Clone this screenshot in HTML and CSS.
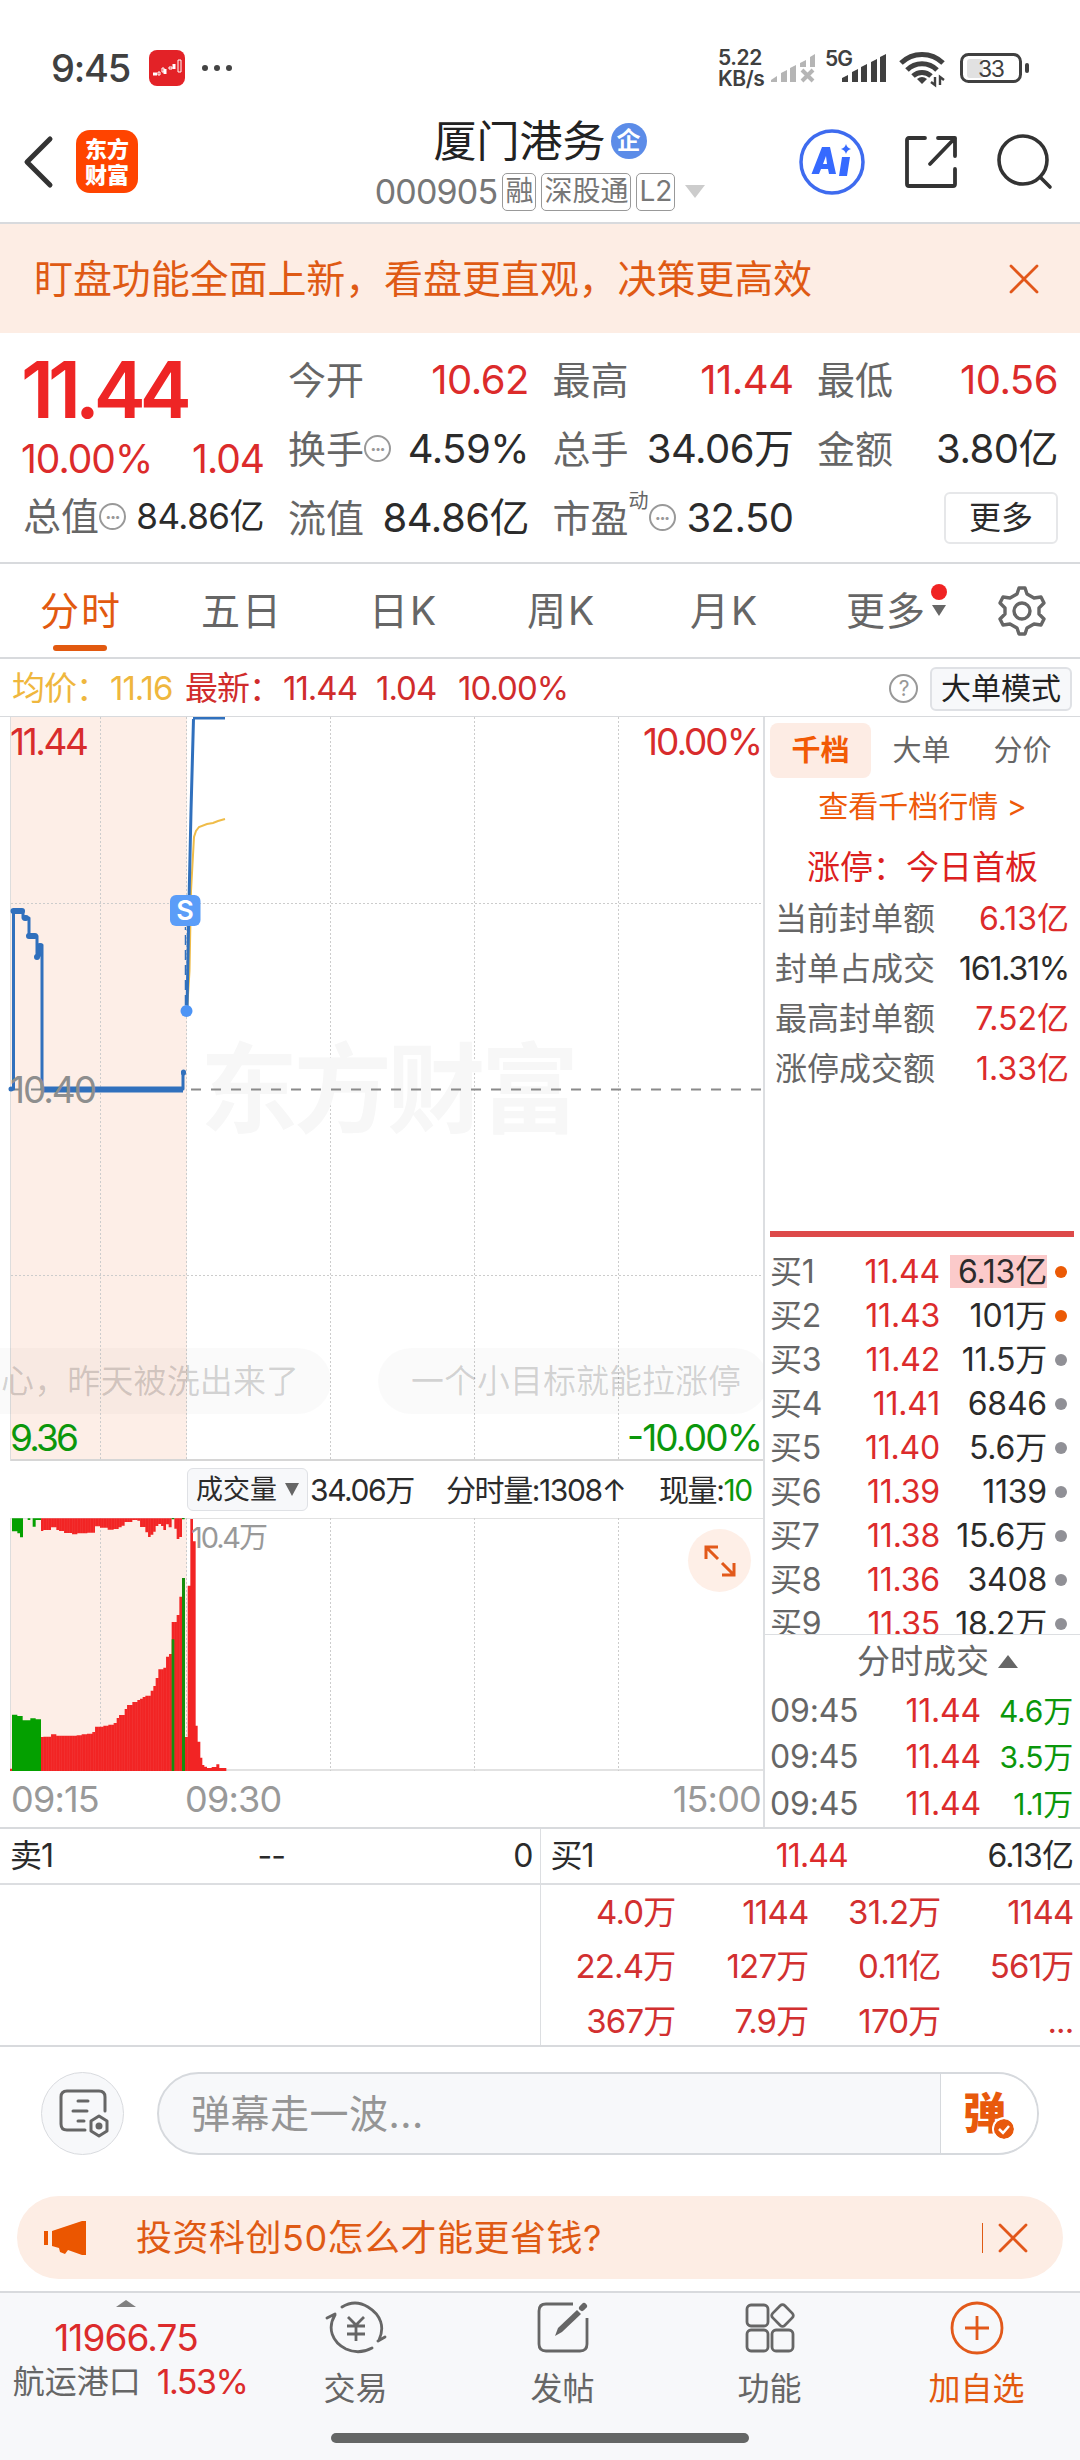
FILE: index.html
```html
<!DOCTYPE html>
<html lang="zh-CN">
<head>
    <meta charset="UTF-8">
    <meta name="viewport" content="width=device-width, initial-scale=1.0">
    <title>厦门港务 000905</title>
    <link rel="stylesheet" href="styles.css">
</head>
<body>
    <div class="status-bar">
        <span class="clock">9:45</span>
        <svg class="app-icon" width="36" height="36" viewBox="0 0 36 36">
            <rect width="36" height="36" rx="8" fill="#e32227"/>
            <path d="M4 24h4M16 19v5M25 14v5" stroke="#fff" stroke-width="3" fill="none"/>
            <path d="M9 22h2v3H9zM13 18h2v4h-2zM20 17h3v2h-3zM29 10h3v12h-3z" fill="none" stroke="#fff"/>
        </svg>
        <svg class="dots" width="34" height="8" viewBox="0 0 34 8" fill="#444">
            <circle cx="4" cy="4" r="3"/><circle cx="16" cy="4" r="3"/><circle cx="28" cy="4" r="3"/>
        </svg>
        <div class="net-speed"><span>5.22</span><span>KB/s</span></div>
        <svg class="signals" width="264" height="48" viewBox="770 44 264 48">
            <g fill="#b5b5b5">
                <path d="M771 82V80l6-4v6zM781 82V73l6-3v12zM790 82V68l6-3v17zM800 67V63l6-3v7zM810 67V57l5-3v13z"/>
                <path d="M802 70l11 11M813 70l-11 11" stroke="#b5b5b5" stroke-width="4"/>
            </g>
            <text class="five-g" x="825" y="66" textLength="28">5G</text>
            <path d="M842 82v-4l6-3v7zM852 82V72l6-3v13zM861 82V67l6-3v18zM871 82V62l6-3v23zM880 82V57l6-3v28z" fill="#404040"/>
            <g fill="none" stroke="#404040" stroke-width="5">
                <path d="M901 63a30 30 0 0 1 42 0M907 70a21 21 0 0 1 30 0M913 76a13 13 0 0 1 18 0"/>
            </g>
            <path d="M922 84l-5-5q5-4 10 0z" fill="#404040"/>
            <path d="M935 77v8l-4-3M940 85v-8l4 3" fill="none" stroke="#404040" stroke-width="2.4"/>
            <rect x="967" y="59" width="16" height="19" rx="3" fill="#e1e1e1"/>
            <rect x="961.500" y="54.500" width="59" height="27" rx="7" fill="none" stroke="#404040" stroke-width="3"/>
            <rect x="1025" y="63" width="4" height="10" rx="2" fill="#404040"/>
            <text class="battery" x="978" y="77" textLength="27">33</text>
        </svg>
    </div>

    <header class="header">
        <div class="header-left">
            <svg width="32" height="54" viewBox="0 0 32 54" fill="none" stroke="#333" stroke-width="5" stroke-linecap="round" stroke-linejoin="round">
                <path d="M27 4L4 27l23 23"/>
            </svg>
            <div class="logo"><span>东方</span><span>财富</span></div>
        </div>
        <div class="header-title">
            <div class="stock-name">厦门港务<span class="corp">企</span></div>
            <div class="stock-code">
                <span class="code">000905</span>
                <span class="tag">融</span>
                <span class="tag">深股通</span>
                <span class="tag">L2</span>
                <svg width="20" height="13" viewBox="0 0 20 13"><path d="M0 0h20L10 13z" fill="#ccc"/></svg>
            </div>
        </div>
        <div class="header-right">
            <svg width="66" height="66" viewBox="0 0 66 66">
                <circle cx="33" cy="33" r="31" fill="none" stroke="#3e6bef" stroke-width="3.500"/>
                <path d="M12.500 45L23 18h8l6 27h-7l-1-5h-7l-2 5zM24 35h4l-1-8z" fill="#366aff" fill-rule="evenodd"/>
                <path d="M43 28h8l-3 19h-8zM47 15q1 4 5 5-4 1-5 5-1-4-5-5 4-1 5-5z" fill="#366aff"/>
            </svg>
            <svg width="54" height="54" viewBox="0 0 54 54" fill="none" stroke="#333" stroke-width="3.800" stroke-linecap="round" stroke-linejoin="round">
                <path d="M21 3H5q-2 0-2 2v44q0 2 2 2h44q2 0 2-2V34M34 3h17v18M51 3L26 29"/>
            </svg>
            <svg width="56" height="56" viewBox="0 0 56 56" fill="none" stroke="#333" stroke-width="3.600" stroke-linecap="round">
                <circle cx="26" cy="26" r="24"/><path d="M43 43l10 10"/>
            </svg>
        </div>
    </header>

    <div class="notice">
        <span>盯盘功能全面上新，看盘更直观，决策更高效</span>
        <svg width="30" height="30" viewBox="0 0 30 30" stroke="#e2571a" stroke-width="2.800" stroke-linecap="round"><path d="M2 2l26 26M28 2L2 28"/></svg>
    </div>

    <section class="quote">
        <div class="quote-main">
            <div class="price">11.44</div>
            <div class="change"><span>10.00%</span><span>1.04</span></div>
            <div class="cell small"><label>总值</label><i class="more-dot">•••</i><b>84.86亿</b></div>
        </div>
        <div class="quote-grid">
            <div class="cell"><label>今开</label><b class="red">10.62</b></div>
            <div class="cell"><label>最高</label><b class="red">11.44</b></div>
            <div class="cell"><label>最低</label><b class="red">10.56</b></div>
            <div class="cell"><label>换手</label><i class="more-dot">•••</i><b>4.59%</b></div>
            <div class="cell"><label>总手</label><b>34.06万</b></div>
            <div class="cell"><label>金额</label><b>3.80亿</b></div>
            <div class="cell"><label>流值</label><b>84.86亿</b></div>
            <div class="cell"><label>市盈<sup>动</sup></label><i class="more-dot">•••</i><b>32.50</b></div>
            <div class="cell end"><span class="more-btn">更多</span></div>
        </div>
    </section>

    <nav class="tabs">
        <span class="tab active">分时</span>
        <span class="tab">五日</span>
        <span class="tab">日K</span>
        <span class="tab">周K</span>
        <span class="tab">月K</span>
        <span class="tab tab-more">更多
            <svg width="18" height="32" viewBox="0 0 18 32"><circle cx="9" cy="8" r="8" fill="#f02323"/><path d="M2 21h14L9 32z" fill="#666"/></svg>
        </span>
        <svg class="gear" width="50" height="50" viewBox="0 0 50 50" fill="none" stroke="#666" stroke-width="3.400" stroke-linejoin="round">
            <path d="M20 8l2-6h6l2 6 7 4 7-1 3 6-5 5v6l5 5-3 6-7-1-7 4-2 6h-6l-2-6-7-4-7 1-3-6 5-5v-6l-5-5 3-6 7 1z"/>
            <circle cx="25" cy="25" r="8"/>
        </svg>
    </nav>

    <div class="info">
        <span class="avg">均价：<em>11.16</em></span>
        <span class="last">最新：<em>11.44</em></span>
        <span class="diff">1.04</span>
        <span class="pct">10.00%</span>
        <i class="help">?</i>
        <span class="mode-btn">大单模式</span>
    </div>

    <main class="board">
        <section class="charts">
            <svg class="price-chart" width="763" height="744" viewBox="0 717 763 744">
                <rect x="11" y="717" width="176" height="744" fill="#fdeee7"/>
                <path d="M10.500 717v744" stroke="#ddd"/>
                <g class="grid-lines">
                    <path d="M100.500 717v744M186.500 717v744M330.500 717v744M474.500 717v744M618.500 717v744M11 903.500h752M11 1275.500h752"/>
                </g>
                <path d="M11 1460h752" stroke="#d6d6d6" stroke-width="2"/>
                <text class="watermark" x="200" y="1125" textLength="379">东方财富</text>
                <path d="M11 1089.500h752" stroke="#8a8a8a" stroke-width="2" stroke-dasharray="10 10"/>
                <path d="M187 1011l2.500-40 1.500-80 3-54 2-6 3-4 8-3 6-1 5-2 7-2" fill="none" stroke="#efbc49" stroke-width="2"/>
                <g fill="none" stroke="#3070bd">
                    <path d="M11 1089h2.500V911H23v7h6v18h8v20h2v-11h3v144h141v-18" stroke-width="3" stroke-linejoin="round"/>
                    <path d="M42 1089.500h141" stroke-width="6"/>
                    <path d="M13.500 911H22M25 918h1M29 936h6M37 957v0M40 946v6" stroke-width="6" stroke-linecap="round"/>
                    <path d="M183.500 1072v1M11 1089v0" stroke-width="5" stroke-linecap="round"/>
                    <path d="M187 1011l2-110 2-90 2.500-92" stroke-width="3"/>
                    <path d="M193 718h32" stroke-width="3"/>
                    <path d="M185.500 1005v-78" stroke-width="1.500" stroke-dasharray="10 5"/>
                </g>
                <circle cx="186.500" cy="1011" r="6" fill="#4d94f5"/>
                <rect x="170" y="895" width="30.500" height="31" rx="6" fill="#5b9df8"/>
                <text class="sell" x="185" y="920">S</text>
                <text class="axis up" x="10" y="755" textLength="79">11.44</text>
                <text class="axis up" x="643" y="755" textLength="120">10.00%</text>
                <text class="axis mid" x="10" y="1103" textLength="87">10.40</text>
                <text class="axis down" x="10" y="1451" textLength="69">9.36</text>
                <text class="axis down" x="627" y="1451" textLength="136">-10.00%</text>
                <g class="bullets">
                    <rect x="-60" y="1348" width="391" height="66" rx="33"/>
                    <text x="-32" y="1393" textLength="331">恶心，昨天被洗出来了</text>
                    <rect x="378" y="1348" width="390" height="66" rx="33"/>
                    <text x="411" y="1393" textLength="330">一个小目标就能拉涨停</text>
                </g>
            </svg>

            <div class="vol-head">
                <span class="vol-btn">成交量<svg width="14" height="13" viewBox="0 0 14 13"><path d="M0 0h14L7 13z" fill="#666"/></svg></span>
                <span class="vol-total">34.06万</span>
                <span class="vol-min">分时量:1308↑</span>
                <span class="vol-now">现量:<em>10</em></span>
            </div>

            <div class="vol-wrap">
                <svg class="vol-chart" width="763" height="253" viewBox="0 1518 763 253">
                    <rect x="11" y="1518" width="176" height="253" fill="#fdeee7"/>
                    <path d="M10.500 1518v253" stroke="#ddd"/>
                    <path d="M11 1518.500h752" stroke="#e2e2e2"/>
                    <path d="M11 1770h752" stroke="#e2e2e2" stroke-width="2"/>
                    <g class="grid-lines"><path d="M100.500 1518v253M186.500 1518v253M330.500 1518v253M474.500 1518v253M618.500 1518v253"/></g>
                    <g transform="translate(0 1500) scale(.33333)">
                        <path id="redBars" fill="#f22424" d="M30 806h93V711h7v-1h23v-7h16v4h61v-1h15v-3h16v-2h16v-5h8v-16h25v-3h15v-3h16v-5h9v-15h7v-9h17v-18h7v-12h16v-9h15v-6h8v-4h8v-5h8v-4h16v-15h8v-14h7v-24h8v-26h15v-5h8v-33h9v-8h8V366h15v-21h8v-55h9v421h16V257h8V57h8v67h8v553h6v48h8v48h6v22h6v5h8v4h14v-3h14v-8h9v11h21v9H30zM30 55h93v38h7v-3h23v-8h16v8h8v3h15v6h24v4h16v-3h30v-2h23V79h15v4h23v6h18v-2h15v-5h9v-5h9V66h23v-6h15v2h8v19h16v16h8v14h8v-7h8v-9h7V78h8v-6h8v6h7v12h8V73h8v9h9V55h8v31h7v31h8v-6h8V55z"/>
                        <clipPath id="barClip"><use href="#redBars"/></clipPath>
                        <path d="M28 430h540" stroke="#fff" stroke-opacity=".16" stroke-width="770" stroke-dasharray="1 6.850" clip-path="url(#barClip)"/>
                        <path fill="#04a000" d="M36 813V644h16v4h16v13h23v-6h16v3h16v155zM36 55v39h16v6h8v12h9V55zM83 55h8v5h-8zM98 55h9v25h-9zM107 55h16v5h-16z"/>
                        <path fill="#158f0d" d="M515 418h8v395h-8zM546 234h9v579h-9zM515 54h8v4h-8zM546 54h8v4h-8z"/>
                    </g>
                    <text class="vol-max" x="191" y="1548" textLength="77">10.4万</text>
                </svg>
                <div class="expand">
                    <svg width="32" height="32" viewBox="0 0 32 32" fill="none" stroke="#e2591a" stroke-width="3"><path d="M2 14V2h12M2 2l12 12M30 18v12H18M30 30L18 18"/></svg>
                </div>
            </div>
            <div class="times"><span>09:15</span><span>09:30</span><span>15:00</span></div>
        </section>

        <aside class="side">
            <div class="side-tabs"><span class="on">千档</span><span>大单</span><span>分价</span></div>
            <div class="side-link">查看千档行情 &gt;</div>
            <div class="limit-title">涨停：今日首板</div>
            <div class="limit"><span>当前封单额</span><b class="red">6.13亿</b></div>
            <div class="limit"><span>封单占成交</span><b class="tight">161.31%</b></div>
            <div class="limit"><span>最高封单额</span><b class="red">7.52亿</b></div>
            <div class="limit"><span>涨停成交额</span><b class="red">1.33亿</b></div>
            <div class="ratio"></div>
            <div class="book">
                <div class="bid hot"><span>买1</span><b>11.44</b><em class="hl">6.13亿</em><i></i></div>
                <div class="bid hot"><span>买2</span><b>11.43</b><em>101万</em><i></i></div>
                <div class="bid"><span>买3</span><b>11.42</b><em>11.5万</em><i></i></div>
                <div class="bid"><span>买4</span><b>11.41</b><em>6846</em><i></i></div>
                <div class="bid"><span>买5</span><b>11.40</b><em>5.6万</em><i></i></div>
                <div class="bid"><span>买6</span><b>11.39</b><em>1139</em><i></i></div>
                <div class="bid"><span>买7</span><b>11.38</b><em>15.6万</em><i></i></div>
                <div class="bid"><span>买8</span><b>11.36</b><em>3408</em><i></i></div>
                <div class="bid"><span>买9</span><b>11.35</b><em>18.2万</em><i></i></div>
            </div>
            <div class="deals-title">分时成交<svg width="20" height="13" viewBox="0 0 20 13"><path d="M0 13h20L10 0z" fill="#666"/></svg></div>
            <div class="deal"><span>09:45</span><b>11.44</b><em>4.6万</em></div>
            <div class="deal"><span>09:45</span><b>11.44</b><em>3.5万</em></div>
            <div class="deal"><span>09:45</span><b>11.44</b><em>1.1万</em></div>
        </aside>
    </main>

    <section class="queue">
        <div class="queue-side sell-side">
            <div class="queue-head"><span>卖1</span><span>--</span><span>0</span></div>
        </div>
        <div class="queue-side">
            <div class="queue-head buy"><span>买1</span><span class="red">11.44</span><span>6.13亿</span></div>
            <div class="queue-grid">
                <span>4.0万</span><span>1144</span><span>31.2万</span><span>1144</span>
                <span>22.4万</span><span>127万</span><span>0.11亿</span><span>561万</span>
                <span>367万</span><span>7.9万</span><span>170万</span><span>...</span>
            </div>
        </div>
    </section>

    <div class="comment">
        <div class="comment-set">
            <svg width="52" height="50" viewBox="0 0 52 50" fill="none" stroke="#666" stroke-width="3" stroke-linecap="round">
                <path d="M26 41H8q-6 0-6-6V8q0-6 6-6h32q6 0 6 6v14M19 12h10M14 22h14M19 32h6"/>
                <path d="M40 27l8 5v10l-8 5-8-5V32z" stroke-linejoin="round"/><circle cx="40" cy="37" r="2" fill="#666"/>
            </svg>
        </div>
        <div class="comment-box">
            <span>弹幕走一波...</span>
            <div class="comment-send">弹
                <svg width="20" height="20" viewBox="0 0 20 20"><circle cx="10" cy="10" r="10" fill="#e8590c"/><path d="M5 10l4 4 6-7" fill="none" stroke="#fff" stroke-width="2.500"/></svg>
            </div>
        </div>
    </div>

    <div class="promo">
        <svg width="42" height="36" viewBox="0 0 42 36" fill="#eb5600"><path d="M0 11h4v14H0zM8 11L38 1v0h4v34h-4l-14-5-3 4-5-2-1-4-7-2z"/></svg>
        <span class="promo-text">投资科创50怎么才能更省钱?</span>
        <svg class="promo-close" width="30" height="30" viewBox="0 0 30 30" stroke="#e2571a" stroke-width="2.800" stroke-linecap="round"><path d="M2 2l26 26M28 2L2 28"/></svg>
    </div>

    <footer class="footer">
        <div class="footer-row">
            <div class="index">
                <svg width="20" height="7" viewBox="0 0 20 7"><path d="M0 7h20L10 0z" fill="#808080"/></svg>
                <div class="index-value">11966.75</div>
                <div class="index-name"><span>航运港口</span><b>1.53%</b></div>
            </div>
            <div class="item">
                <svg width="62" height="54" viewBox="0 0 62 54" fill="none" stroke="#666" stroke-width="2.800" stroke-linecap="round">
                    <path d="M17 6Q30-2 43 6C56 14 60 26 54 39M53 40l7-4M47 47Q34 54 21 48C7 41 2 27 10 14M2 17l8-4"/>
                    <path d="M23 16l8 8 8-8M22 25h18M22 33h18M31 25v15" stroke-linecap="butt"/>
                </svg>
                <span>交易</span>
            </div>
            <div class="item">
                <svg width="52" height="54" viewBox="0 0 52 54" fill="none" stroke="#666" stroke-width="2.800">
                    <path d="M36 3H9q-7 0-7 7v33q0 7 7 7h34q7 0 7-7V17"/>
                    <path d="M18 35l3-8 19-18 4 4-19 18z" fill="#666" stroke="none"/><path d="M45 7l2-2" stroke-width="6" stroke-linecap="round"/>
                </svg>
                <span>发帖</span>
            </div>
            <div class="item">
                <svg width="50" height="54" viewBox="0 0 50 54" fill="none" stroke="#666" stroke-width="2.800">
                    <rect x="2" y="4" width="21" height="21" rx="4"/><rect x="2" y="29" width="21" height="21" rx="4"/><rect x="27" y="29" width="21" height="21" rx="4"/>
                    <rect x="29" y="6" width="17" height="17" rx="3" transform="rotate(45 37.500 14.500)"/>
                </svg>
                <span>功能</span>
            </div>
            <div class="item add">
                <svg width="54" height="54" viewBox="0 0 54 54" fill="none" stroke="#e2591a" stroke-width="2.800"><circle cx="27" cy="27" r="25"/><path d="M15 27h24M27 15v24"/></svg>
                <span>加自选</span>
            </div>
        </div>
        <div class="home-bar"></div>
    </footer>
</body>
</html>
```
FILE: styles.css
```css
* {
    box-sizing: border-box;
}

body {
    margin: 0;
    width: 1080px;
    height: 2460px;
    overflow: hidden;
    background-color: #fff;
    color: #2b2b2b;
    font-family: Inter, "Noto Sans CJK SC", sans-serif;
    line-height: 1;
    white-space: nowrap;
}

svg {
    display: block;
    flex: none;
}

b, em, i {
    font-weight: 400;
    font-style: normal;
}

.red {
    color: #dc2b2b;
}

/* status bar */
.status-bar {
    display: flex;
    align-items: center;
    height: 112px;
    padding: 24px 46px 0 51px;
    color: #404040;
}

.clock {
    width: 98px;
    font-size: 38px;
    font-weight: 500;
    letter-spacing: -1.2px;
}

.dots {
    margin-left: 16px;
}

.net-speed {
    display: flex;
    flex-direction: column;
    width: 52px;
    margin-left: auto;
    font-size: 21px;
    font-weight: 600;
    letter-spacing: -0.4px;
}

.five-g {
    font-size: 21px;
    font-weight: 600;
    fill: #404040;
}

.battery {
    font-size: 23px;
    fill: #404040;
}

/* header */
.header {
    display: grid;
    grid-template-columns: 300px 1fr 300px;
    align-items: center;
    height: 112px;
    padding-bottom: 11px;
    border-bottom: 2px solid #d8dadd;
}

.header-left {
    display: flex;
    align-items: center;
    gap: 21px;
    padding-left: 23px;
}

.logo {
    display: flex;
    flex-direction: column;
    align-items: center;
    justify-content: center;
    gap: 4px;
    width: 62px;
    height: 63px;
    border-radius: 14px;
    background-color: #ff4400;
    color: #fff;
    font-size: 22px;
    font-weight: 900;
}

.header-title {
    display: flex;
    flex-direction: column;
    align-items: center;
    gap: 10px;
    padding-top: 7px;
}

.stock-name {
    display: flex;
    align-items: center;
    gap: 5px;
    color: #222;
    font-size: 43px;
}

.corp {
    width: 36px;
    height: 36px;
    border-radius: 50%;
    background-color: #5c8ce8;
    color: #fff;
    font-size: 24px;
    font-weight: 700;
    line-height: 36px;
    text-align: center;
}

.stock-code {
    display: flex;
    align-items: center;
    gap: 5px;
    color: #777;
}

.code {
    font-size: 34px;
    letter-spacing: -0.8px;
}

.tag {
    height: 38px;
    padding: 0 2px;
    border: 1.5px solid #999;
    border-radius: 5px;
    font-size: 28px;
    line-height: 35px;
}

.stock-code svg {
    margin-left: 5px;
}

.header-right {
    display: flex;
    align-items: center;
    justify-content: flex-end;
    gap: 39px;
    padding-right: 27px;
}

.notice {
    display: flex;
    align-items: center;
    justify-content: space-between;
    height: 109px;
    padding: 0 41px 0 34px;
    background-color: #fdede4;
    color: #df5a14;
    font-size: 39px;
    letter-spacing: -0.1px;
}

/* quote */
.quote {
    display: flex;
    gap: 24px;
    height: 231px;
    padding: 12px 22px 0 23px;
    border-bottom: 2px solid #d8dadd;
}

.quote-main {
    width: 241px;
}

.price {
    height: 90px;
    margin-left: -2px;
    color: #ee2525;
    font-size: 78px;
    font-weight: 600;
    line-height: 90px;
    letter-spacing: -6px;
}

.change {
    display: flex;
    justify-content: space-between;
    height: 46px;
    align-items: center;
    margin-left: -2px;
    color: #dc2b2b;
    font-size: 39px;
    letter-spacing: -1px;
}

.quote-grid {
    flex: 1;
    display: grid;
    grid-template-columns: repeat(3, 241px);
    grid-auto-rows: 69px;
    column-gap: 23.500px;
}

.cell {
    display: flex;
    align-items: center;
    font-size: 40px;
}

.cell label {
    color: #666;
    font-size: 38px;
}

.cell b {
    margin-left: auto;
    letter-spacing: -0.5px;
}

.cell.small {
    height: 70px;
}

.cell.small b {
    font-size: 35px;
}

.cell sup {
    align-self: flex-start;
    font-size: 20px;
    line-height: 0;
    vertical-align: 24px;
}

.more-dot {
    width: 27px;
    height: 27px;
    border: 2px solid #999;
    border-radius: 50%;
    color: #999;
    font-size: 10px;
    line-height: 23px;
    letter-spacing: -1px;
    text-align: center;
}

.cell.end {
    justify-content: flex-end;
}

.more-btn {
    width: 114px;
    height: 52px;
    border: 2px solid #e6e7e9;
    border-radius: 6px;
    font-size: 32px;
    line-height: 47px;
    text-align: center;
}

/* tabs */
.tabs {
    display: grid;
    grid-template-columns: 161px 168px 158px 163px 156px 151px auto;
    align-items: center;
    height: 95px;
    padding-left: 40px;
    border-bottom: 2px solid #d8dadd;
    color: #666;
    font-size: 39px;
    letter-spacing: 2px;
}

.tab {
    height: 93px;
    line-height: 93px;
}

.tab.active {
    position: relative;
    color: #e2590f;
}

.tab.active::after {
    content: "";
    position: absolute;
    left: 13px;
    bottom: 6px;
    width: 54px;
    height: 6px;
    border-radius: 3px;
    background-color: #e2590f;
}

.tab-more {
    display: flex;
    align-items: center;
    gap: 4px;
    letter-spacing: 1px;
}

.tab-more svg {
    margin-top: -22px;
}

.info {
    display: flex;
    align-items: center;
    height: 58px;
    padding: 2px 8px 0 12px;
    border-bottom: 1px solid #d8dadd;
    color: #d02c2c;
    font-size: 33px;
    letter-spacing: -1px;
}

.avg {
    width: 173px;
    color: #efb73e;
}

.last {
    width: 191px;
}

.avg em,
.last em {
    margin-left: 2px;
}

.diff {
    width: 82px;
}

.help {
    width: 29px;
    height: 29px;
    margin: 0 12px 0 auto;
    border: 2px solid #999;
    border-radius: 50%;
    color: #999;
    font-size: 21px;
    line-height: 25px;
    text-align: center;
}

.mode-btn {
    width: 142px;
    height: 44px;
    border: 2px solid #dfe1e5;
    border-radius: 6px;
    background-color: #f7f8fa;
    color: #222;
    font-size: 30px;
    line-height: 39px;
    letter-spacing: 0;
    text-align: center;
}

/* charts */
.board {
    display: flex;
    height: 1112px;
    border-bottom: 2px solid #d8dadd;
}

.charts {
    width: 763px;
}

.grid-lines {
    fill: none;
    stroke: #ccc;
    stroke-dasharray: 2 2;
}

.watermark {
    fill: #f7f7f7;
    font-size: 98px;
    font-weight: 700;
}

.sell {
    fill: #fff;
    font-size: 27px;
    font-weight: 600;
    text-anchor: middle;
}

.axis {
    font-size: 37px;
}

.up {
    fill: #d82c2c;
}

.mid {
    fill: #8e8e8e;
}

.down {
    fill: #0b970b;
}

.bullets rect {
    fill: #000;
    fill-opacity: 0.02;
}

.bullets text {
    fill: #000;
    fill-opacity: 0.16;
    font-size: 33px;
}

.vol-head {
    display: flex;
    align-items: center;
    height: 57px;
    padding-left: 187px;
    font-size: 30px;
    letter-spacing: -1.4px;
}

.vol-btn {
    display: flex;
    align-items: center;
    justify-content: space-between;
    width: 121px;
    height: 43px;
    padding: 0 8px;
    border: 1px solid #dfe1e5;
    border-radius: 6px;
    background-color: #f7f8fa;
    font-size: 27px;
    letter-spacing: 0;
}

.vol-total {
    width: 136px;
    padding-left: 2px;
}

.vol-min {
    width: 215px;
    padding-left: 2px;
}

.vol-now em {
    color: #0b970b;
}

.vol-wrap {
    position: relative;
}

.vol-max {
    fill: #999;
    font-size: 29px;
}

.expand {
    position: absolute;
    top: 11px;
    right: 12px;
    display: flex;
    align-items: center;
    justify-content: center;
    width: 63px;
    height: 63px;
    border-radius: 50%;
    background-color: #feefe7;
}

.times {
    display: grid;
    grid-template-columns: 174px 1fr auto;
    align-items: center;
    height: 56px;
    padding: 0 2px 0 11px;
    color: #999;
    font-size: 36px;
    letter-spacing: -0.8px;
}

/* side panel */
.side {
    flex: 1;
    display: flex;
    flex-direction: column;
    border-left: 2px solid #dcdee1;
}

.side-tabs {
    display: flex;
    margin: 6px 0 0 5px;
    color: #666;
    font-size: 29px;
    text-align: center;
    line-height: 55px;
}

.side-tabs span {
    width: 101px;
}

.side-tabs .on {
    border-radius: 8px;
    background-color: #fdece4;
    color: #f25a05;
    font-weight: 700;
}

.side-link {
    height: 56px;
    color: #ee5a0a;
    font-size: 30px;
    line-height: 56px;
    text-align: center;
}

.limit-title {
    height: 60px;
    color: #dc2020;
    font-size: 33px;
    line-height: 66px;
    text-align: center;
}

.limit {
    display: flex;
    align-items: center;
    justify-content: space-between;
    height: 50px;
    padding: 0 11px 0 10px;
    font-size: 32px;
}

.limit span {
    color: #666;
}

.limit .tight {
    letter-spacing: -1.2px;
}

.ratio {
    height: 6px;
    margin: 137px 6px 13px 5px;
    background-color: #dd4a4a;
}

.book {
    height: 386px;
    overflow: hidden;
    border-bottom: 1px solid #dcdee1;
}

.bid {
    display: grid;
    grid-template-columns: 60px 110px 1fr 27px;
    align-items: center;
    height: 44px;
    padding: 0 6px 0 5px;
    font-size: 32px;
    letter-spacing: -0.2px;
}

.bid span,
.deal span {
    color: #666;
}

.bid b,
.deal b {
    color: #dc2b2b;
    text-align: right;
}

.bid em {
    justify-self: end;
    padding: 1px 0 0 8px;
}

.bid .hl {
    height: 33px;
    background-color: #fbcaca;
}

.bid i {
    justify-self: end;
    width: 12px;
    height: 12px;
    margin-right: 7px;
    border-radius: 50%;
    background-color: #909096;
}

.bid.hot i {
    background-color: #eb5a05;
}

.deals-title {
    display: flex;
    align-items: center;
    gap: 9px;
    height: 53px;
    padding-left: 92px;
    color: #666;
    font-size: 33px;
}

.deal {
    display: grid;
    grid-template-columns: 90px 121px 1fr;
    align-items: center;
    height: 46.500px;
    padding: 0 7px 0 5px;
    font-size: 32px;
    letter-spacing: -0.2px;
}

.deal em {
    color: #0b970b;
    font-size: 30px;
    text-align: right;
}

/* order queue */
.queue {
    display: flex;
    height: 218px;
    border-bottom: 2px solid #d8dadd;
}

.queue-side {
    flex: 1;
}

.sell-side {
    border-right: 1px solid #dcdee1;
}

.queue-head {
    display: grid;
    grid-template-columns: 1fr 1fr 1fr;
    align-items: center;
    height: 56px;
    padding: 0 7px 0 10px;
    border-bottom: 2px solid #dcdee1;
    font-size: 32px;
    letter-spacing: -0.9px;
}

.queue-head span:nth-child(2) {
    text-align: center;
}

.queue-head span:nth-child(3) {
    text-align: right;
}

.queue-grid {
    display: grid;
    grid-template-columns: 135px 133px 132px 133px;
    grid-auto-rows: 54.500px;
    align-items: center;
    color: #d23030;
    font-size: 33px;
    letter-spacing: -0.8px;
    text-align: right;
}

/* comment input */
.comment {
    display: flex;
    gap: 33px;
    padding: 25px 41px;
}

.comment-set {
    display: flex;
    align-items: center;
    justify-content: center;
    width: 83px;
    height: 83px;
    padding-left: 4px;
    border: 1.5px solid #d9dbdf;
    border-radius: 50%;
    background-color: #f7f8fa;
}

.comment-box {
    flex: 1;
    display: flex;
    align-items: center;
    justify-content: space-between;
    height: 83px;
    padding-left: 32px;
    overflow: hidden;
    border: 2px solid #d6d9dd;
    border-radius: 42px;
    background-color: #f7f8fa;
    color: #959595;
    font-size: 39px;
    letter-spacing: 0.5px;
}

.comment-send {
    display: flex;
    align-items: center;
    width: 97px;
    height: 80px;
    padding-left: 22px;
    border-left: 1.5px solid #d6d9dd;
    background-color: #fff;
    color: #e8590c;
    font-size: 43px;
    font-weight: 900;
}

.comment-send svg {
    margin: 30px 0 0 -13px;
    border-radius: 50%;
    box-shadow: 0 0 0 2px #fff;
}

/* promo strip */
.promo {
    display: flex;
    align-items: center;
    height: 83px;
    margin: 16px 17px 12px;
    padding: 0 35px 0 27px;
    border-radius: 42px;
    background-color: #fdede4;
    color: #df5a14;
    font-size: 36px;
    letter-spacing: 0.5px;
}

.promo-text {
    flex: 1;
    padding-left: 50px;
}

.promo-close {
    width: 46px;
    padding-left: 15px;
    border-left: 1px solid #df5a14;
    overflow: visible;
}

/* footer */
.footer {
    height: 169px;
    border-top: 2px solid #d8dadd;
    background-color: #f7f8fa;
}

.footer-row {
    display: grid;
    grid-template-columns: 252px repeat(4, 207px);
    height: 140px;
}

.index {
    display: flex;
    flex-direction: column;
    align-items: center;
    padding-top: 7px;
}

.index-value {
    margin-top: 12px;
    color: #dc2b2b;
    font-size: 37px;
    letter-spacing: -0.9px;
}

.index-name {
    display: flex;
    align-items: center;
    gap: 16px;
    margin: 9px 0 0 8px;
    color: #666;
    font-size: 32px;
}

.index-name b {
    color: #dc2b2b;
    font-size: 34px;
    letter-spacing: -1.5px;
}

.item {
    display: flex;
    flex-direction: column;
    align-items: center;
    gap: 18px;
    padding-top: 8px;
    color: #666;
    font-size: 32px;
}

.add {
    color: #e2590f;
}

.home-bar {
    width: 418px;
    height: 10px;
    margin: 0 auto;
    border-radius: 5px;
    background-color: #646665;
}
```
